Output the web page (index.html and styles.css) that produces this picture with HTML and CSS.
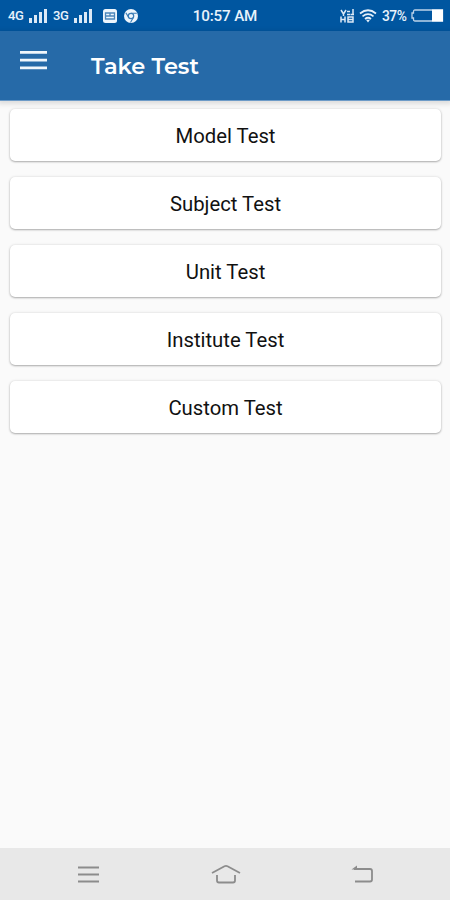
FILE: index.html
```html
<!DOCTYPE html>
<html lang="en">
<head>
<meta charset="utf-8">
<title>Take Test</title>
<link rel="stylesheet" href="styles.css">
</head>
<body>
<div class="status">
  <div class="status-left">
    <span class="network">4G</span>
    <svg class="signal" width="19" height="16" viewBox="0 0 19 16"><path d="M0 10h3v5H0zM5 7h3v8H5zM10 4h3v11h-3zM15 1h3v14h-3z"/></svg>
    <span class="network second">3G</span>
    <svg class="signal" width="19" height="16" viewBox="0 0 19 16"><path d="M0 10h3v5H0zM5 7h3v8H5zM10 4h3v11h-3zM15 1h3v14h-3z"/></svg>
    <svg class="notice" width="14" height="14" viewBox="0 0 14 14"><rect width="14" height="14" rx="2.5" fill="#edf5fc"/><path d="M2.500 4h9v6h-9zM2.500 7h9M7 4v3" fill="none" stroke="#4c86ba" stroke-width="1.300"/></svg>
    <svg class="chrome" width="14" height="14" viewBox="0 0 14 14"><circle cx="7" cy="7" r="7" fill="#edf5fc"/><circle cx="7" cy="7" r="2.7" fill="none" stroke="#387bb5" stroke-width="1.2"/><path d="M7 4.3h5.8M4.7 8.4 1.8 3.7M9.3 8.4l-2.8 5" stroke="#387bb5" stroke-width="1.1"/></svg>
  </div>
  <span class="clock">10:57 AM</span>
  <div class="status-right">
    <svg width="15" height="14" viewBox="0 0 15 14" fill="none" stroke="#dce9f6" stroke-width="1.5"><path d="M1 1l2.500 4L6 1M3.500 5v2M7 2.500h3M7 5.500h3M13 0v6M10.500 5.500h3.500M1 7.500v6M1 10.500h4M5 7.500v6M8 8h5v5H8zM8 10.500h5"/></svg>
    <svg class="wifi" width="18" height="14" viewBox="0 0 18 14" fill="none" stroke="#e5f0fa" stroke-width="1.7"><path d="M1 4.5q8-6.5 16 0M3.5 7.3q5.5-4.5 11 0M6 10q3-2.5 6 0"/><path d="M7 10.7h4L9 13.5z" fill="#e5f0fa" stroke="none"/></svg>
    <span class="percent">37%</span>
    <svg class="battery" width="33" height="13" viewBox="0 0 33 13"><path d="M4 1h27.5v11H4q-1.5 0-1.5-1.5V9H1V4h1.5V2.5Q2.500 1 4 1z" fill="none" stroke="#bcd3e9" stroke-width="1.3"/><path d="M21 .5h11v12H21z" fill="#fff"/></svg>
  </div>
</div>
<header class="toolbar">
  <svg class="menu" width="27" height="20" viewBox="0 0 27 20"><path d="M0 2.300h27M0 10.100h27M0 17.900h27" stroke="#f0f6fb" stroke-width="2.700"/></svg>
  <h1>Take Test</h1>
</header>
<main class="tests">
  <button>Model Test</button>
  <button>Subject Test</button>
  <button>Unit Test</button>
  <button>Institute Test</button>
  <button>Custom Test</button>
</main>
<nav class="navigation">
  <svg width="30" height="20" viewBox="0 0 30 20"><path d="M5 3.500h21M5 10.500h21M5 17.500h21"/></svg>
  <svg width="30" height="20" viewBox="0 0 30 20"><path d="M1 9 13.500 2.200q1.500-.8 3 0L29 9M6 11v5.500q0 2 2 2h14q2 0 2-2V11"/></svg>
  <svg width="30" height="20" viewBox="0 0 30 20"><path d="M6 5h16q2 0 2 2v8.500q0 2-2 2H7"/><path class="arrowhead" d="M3.500 5.500 9 1.500v4z"/></svg>
</nav>
</body>
</html>
```
FILE: styles.css
```css
* { box-sizing: border-box; }
body {
  margin: 0;
  height: 900px;
  display: flex;
  flex-direction: column;
  background: #fafafa;
  font-family: Roboto, sans-serif;
  overflow: hidden;
}
svg { display: block; flex: none; }
.status {
  height: 31px;
  flex: none;
  display: grid;
  grid-template-columns: 180px 90px 180px;
  align-items: center;
  background: #0056a0;
  color: #e8f2fb;
}
.status-left, .status-right { display: flex; align-items: center; }
.status-left { padding-left: 8px; }
.status-right { justify-content: flex-end; padding-right: 6px; }
.network { width: 21px; font-size: 13px; font-weight: 500; letter-spacing: -.3px; }
.second { margin-left: 5px; }
.signal { fill: #dce9f6; }
.notice { margin-left: 10px; }
.chrome { margin-left: 7px; }
.clock { text-align: center; font-size: 15.2px; font-weight: 500; letter-spacing: -.15px; white-space: nowrap; }
.wifi { margin-left: 4px; }
.percent { margin-left: 5px; width: 29px; font-size: 13.8px; font-weight: 500; letter-spacing: -.5px; }
.toolbar {
  height: 69px;
  flex: none;
  display: flex;
  align-items: flex-start;
  padding: 19px 20px 0;
  background: #266aa8;
  box-shadow: 0 1px 0 #6d9bc7, 0 2px 5px 2px rgba(0, 0, 0, .12);
}
.toolbar h1 {
  margin: 3px 0 0 44px;
  color: #fff;
  font: 600 22.5px/26px Montserrat, Inter, sans-serif;
}
.tests {
  flex: 1;
  display: flex;
  flex-direction: column;
  gap: 16px;
  padding: 9px 9px 0 10px;
}
.tests button {
  height: 52px;
  flex: none;
  padding: 2px 0 0;
  border: 0;
  border-radius: 5px;
  background: #fff;
  color: #111;
  font: 400 20.3px/26px Roboto, sans-serif;
  box-shadow: 0 1px 2px rgba(0, 0, 0, .28), 0 0 3px rgba(0, 0, 0, .12);
}
.navigation {
  height: 52px;
  flex: none;
  display: flex;
  justify-content: space-between;
  align-items: center;
  padding: 0 72px 0 73px;
  background: #e8e8e8;
}
.navigation svg { fill: none; stroke: #8c8c8c; stroke-width: 1.8; }
.navigation .arrowhead { fill: #8c8c8c; stroke: none; }
```
